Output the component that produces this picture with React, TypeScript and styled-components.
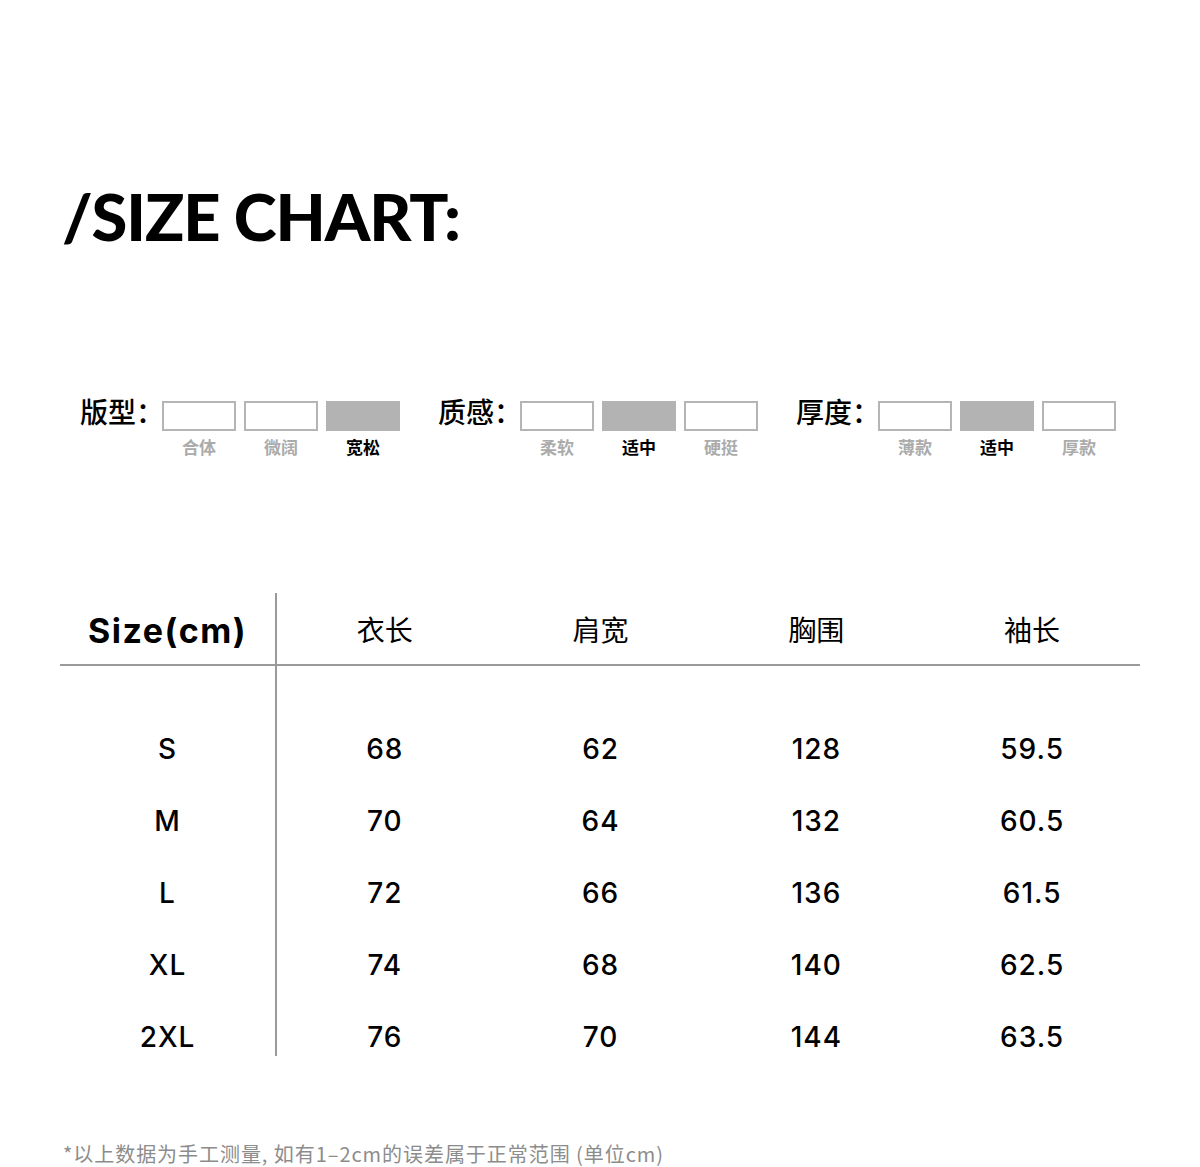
import React from 'react';
import styled, { createGlobalStyle } from 'styled-components';

const GlobalStyle = createGlobalStyle`
  html, body {
    margin: 0;
    padding: 0;
    background: #ffffff;
  }
  body {
    font-family: Inter, 'Noto Sans CJK SC', sans-serif;
    color: #000000;
  }
`;

interface IOption {
  label: string;
  active: boolean;
}

interface IAttr {
  title: string;
  options: IOption[];
}

const attrs: IAttr[] = [
  {
    title: '版型',
    options: [
      { label: '合体', active: false },
      { label: '微阔', active: false },
      { label: '宽松', active: true },
    ],
  },
  {
    title: '质感',
    options: [
      { label: '柔软', active: false },
      { label: '适中', active: true },
      { label: '硬挺', active: false },
    ],
  },
  {
    title: '厚度',
    options: [
      { label: '薄款', active: false },
      { label: '适中', active: true },
      { label: '厚款', active: false },
    ],
  },
];

const headers = ['衣长', '肩宽', '胸围', '袖长'];

const rows: [string, string, string, string, string][] = [
  ['S', '68', '62', '128', '59.5'],
  ['M', '70', '64', '132', '60.5'],
  ['L', '72', '66', '136', '61.5'],
  ['XL', '74', '68', '140', '62.5'],
  ['2XL', '76', '70', '144', '63.5'],
];

export default function App() {
  return (
    <>
      <GlobalStyle />
      <StyledPage>
        <Title>/SIZE CHART:</Title>

        <AttrRow>
          {attrs.map((attr) => (
            <AttrGroup key={attr.title}>
              <AttrTitle>{attr.title}：</AttrTitle>
              {attr.options.map((opt) => (
                <Option key={opt.label}>
                  <OptionBox $active={opt.active} />
                  <OptionLabel $active={opt.active}>{opt.label}</OptionLabel>
                </Option>
              ))}
            </AttrGroup>
          ))}
        </AttrRow>

        <Table>
          <HeadCell $first>Size(cm)</HeadCell>
          {headers.map((h) => (
            <HeadCell key={h}>{h}</HeadCell>
          ))}
          <Spacer $first />
          <Spacer $span />
          {rows.map((row, ri) =>
            row.map((cell, ci) => (
              <Cell key={`${ri}-${ci}`} $first={ci === 0} $last={ri === rows.length - 1}>
                {cell}
              </Cell>
            )),
          )}
        </Table>

        <Note>*以上数据为手工测量, 如有1–2cm的误差属于正常范围 (单位cm)</Note>
      </StyledPage>
    </>
  );
}

const StyledPage = styled.div`
  width: 1200px;
  height: 1167px;
  overflow: hidden;
  padding: 0 60px;
  box-sizing: border-box;
`;

const Title = styled.h1`
  margin: 0;
  padding: 181px 0 0 2px;
  font-family: Lato, Inter, sans-serif;
  font-weight: 900;
  font-size: 65px;
  line-height: 70px;
  letter-spacing: -1.1px;
  color: #000000;
`;

const AttrRow = styled.div`
  display: flex;
  gap: 38px;
  margin-top: 150px;
  padding-left: 20px;
`;

const AttrGroup = styled.div`
  display: flex;
  align-items: flex-start;
  gap: 8px;
`;

const AttrTitle = styled.div`
  width: 74px;
  font-family: 'Noto Sans CJK SC', sans-serif;
  font-size: 28px;
  line-height: 28px;
  font-weight: 500;
  margin-top: -4px;
  white-space: nowrap;
`;

const Option = styled.div`
  display: flex;
  flex-direction: column;
  align-items: center;
  width: 74px;
`;

const OptionBox = styled.div<{ $active: boolean }>`
  width: 74px;
  height: 30px;
  box-sizing: border-box;
  border: 2px solid ${(p) => (p.$active ? '#b3b3b3' : '#b5b5b5')};
  background: ${(p) => (p.$active ? '#b3b3b3' : '#ffffff')};
`;

const OptionLabel = styled.div<{ $active: boolean }>`
  margin-top: 6px;
  font-family: 'Noto Sans CJK SC', sans-serif;
  font-size: 17px;
  line-height: 20px;
  font-weight: 700;
  color: ${(p) => (p.$active ? '#000000' : '#ababab')};
`;

const Table = styled.div`
  display: grid;
  grid-template-columns: 217px repeat(4, 1fr);
  margin-top: 136px;
`;

const HeadCell = styled.div<{ $first?: boolean }>`
  height: 73px;
  display: flex;
  align-items: center;
  justify-content: center;
  border-bottom: 2px solid #9a9a9a;
  border-right: ${(p) => (p.$first ? '2px solid #9a9a9a' : 'none')};
  font-family: ${(p) => (p.$first ? 'Inter, sans-serif' : "'Noto Sans CJK SC', sans-serif")};
  font-weight: ${(p) => (p.$first ? 700 : 400)};
  font-size: ${(p) => (p.$first ? '34px' : '28px')};
  letter-spacing: ${(p) => (p.$first ? '1.5px' : '0')};
  padding-top: ${(p) => (p.$first ? '4px' : '0')};
  box-sizing: border-box;
`;

const Spacer = styled.div<{ $first?: boolean; $span?: boolean }>`
  height: 47px;
  grid-column: ${(p) => (p.$span ? '2 / span 4' : 'auto')};
  border-right: ${(p) => (p.$first ? '2px solid #9a9a9a' : 'none')};
`;

const Cell = styled.div<{ $first: boolean; $last: boolean }>`
  height: ${(p) => (p.$last ? '55px' : '72px')};
  display: flex;
  align-items: ${(p) => (p.$last ? 'flex-start' : 'center')};
  justify-content: center;
  border-right: ${(p) => (p.$first ? '2px solid #9a9a9a' : 'none')};
  font-family: Inter, sans-serif;
  font-weight: 500;
  font-size: 28px;
  line-height: 36px;
  letter-spacing: 1px;
  padding-top: ${(p) => (p.$last ? '18px' : '0')};
  box-sizing: border-box;
`;

const Note = styled.div`
  margin-top: 88px;
  padding-left: 3px;
  font-family: 'Noto Sans CJK SC', sans-serif;
  font-size: 20px;
  line-height: 20px;
  letter-spacing: 0.95px;
  color: #8c8c8c;
  white-space: nowrap;
`;
